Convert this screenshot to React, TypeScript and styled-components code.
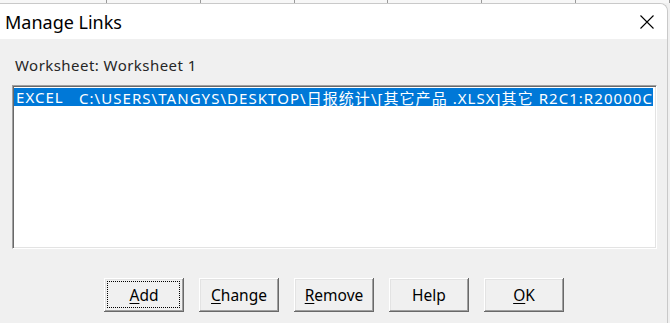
import React from 'react';
import styled, { createGlobalStyle } from 'styled-components';

const Global = createGlobalStyle`
  html, body { margin: 0; padding: 0; }
  body {
    width: 670px;
    height: 323px;
    overflow: hidden;
    background: #f0f0f0;
    font-family: "Segoe UI", "Noto Sans", "Noto Sans CJK SC", sans-serif;
  }
`;

const Screen = styled.div`
  display: flex;
  flex-direction: column;
  height: 323px;
`;

const BackStrip = styled.div`
  height: 3px;
  display: flex;
  background: #f7f7f7;
  padding-left: 13px;
`;

const BackCell = styled.div`
  width: 97px;
  border-right: 1px solid #9a9a9a;
  box-sizing: border-box;
`;

const Window = styled.div`
  flex: 1;
  display: flex;
  flex-direction: column;
  width: 668px;
  background: #f0f0f0;
  border-top-right-radius: 8px;
  border-top: 1px solid #c9c9c9;
  border-right: 1px solid #c9c9c9;
  box-sizing: border-box;
  overflow: hidden;
`;

const TitleBar = styled.div`
  height: 35px;
  display: flex;
  align-items: center;
  justify-content: space-between;
  background: #ffffff;
  padding: 0 12px 0 5px;
`;

const Title = styled.div`
  font-size: 18px;
  color: #000;
  font-family: "Noto Sans", sans-serif;
`;

const CloseIcon = styled.svg`
  width: 16px;
  height: 16px;
  display: block;
`;

const Body = styled.div`
  flex: 1;
  display: flex;
  flex-direction: column;
  padding: 0 10px 0 12px;
`;

const Label = styled.div`
  margin-top: 17px;
  height: 18px;
  line-height: 18px;
  font-size: 15px;
  letter-spacing: 0.45px;
  color: #262626;
  padding-left: 3px;
  font-family: "Noto Sans", sans-serif;
`;

const ListBox = styled.div`
  margin-top: 11px;
  height: 164px;
  background: #fff;
  box-sizing: border-box;
  border-top: 1px solid #a0a0a0;
  border-left: 1px solid #a0a0a0;
  border-bottom: 1px solid #ffffff;
  border-right: 1px solid #ffffff;
  box-shadow: inset 1px 1px #696969, inset -1px -1px #e3e3e3;
  padding: 2px 3px 2px 1px;
  overflow: hidden;
`;

const Row = styled.div<{ $selected?: boolean }>`
  height: 18px;
  display: flex;
  align-items: center;
  white-space: pre;
  overflow: hidden;
  padding-left: 2px;
  font-size: 15px;
  letter-spacing: 1.05px;
  font-family: "Noto Sans", "Noto Sans CJK SC", sans-serif;
  background: ${(p) => (p.$selected ? '#0078d7' : 'transparent')};
  color: ${(p) => (p.$selected ? '#ffffff' : '#000000')};
`;

const Kind = styled.span`
  width: 63px;
  flex: none;
`;

const Path = styled.span`
  flex: none;
`;

const ButtonRow = styled.div`
  margin-top: 29px;
  display: flex;
  gap: 15px;
  padding-left: 92px;
`;

const Button = styled.div<{ $default?: boolean }>`
  width: 80px;
  height: 34px;
  box-sizing: border-box;
  display: flex;
  align-items: center;
  justify-content: center;
  position: relative;
  background: #f0f0f0;
  font-size: 15.5px;
  color: #000;
  font-family: "Noto Sans", sans-serif;
  box-shadow: inset -1px -1px #696969, inset 1px 1px #ffffff, inset -2px -2px #a0a0a0, inset 2px 2px #e3e3e3;
  ${(p) =>
    p.$default
      ? `
    &::after {
      content: '';
      position: absolute;
      left: 3px; top: 3px; right: 4px; bottom: 4px;
      border: 1px dotted #000;
    }
  `
      : ''}
`;

const Key = styled.span`
  text-decoration: underline;
  text-underline-offset: 2px;
`;

export default function App() {
  return (
    <Screen>
      <Global />
      <BackStrip>
        <BackCell />
        <BackCell />
        <BackCell />
        <BackCell />
        <BackCell />
        <BackCell />
        <BackCell />
      </BackStrip>
      <Window>
        <TitleBar>
          <Title>Manage Links</Title>
          <CloseIcon viewBox="0 0 16 16">
            <path d="M1.5 1.5 L14.5 14.5 M14.5 1.5 L1.5 14.5" stroke="#000" strokeWidth="1.1" fill="none" />
          </CloseIcon>
        </TitleBar>
        <Body>
          <Label>Worksheet: Worksheet 1</Label>
          <ListBox>
            <Row $selected>
              <Kind>EXCEL</Kind>
              <Path>C:\USERS\TANGYS\DESKTOP\日报统计\[其它产品 .XLSX]其它 R2C1:R20000C</Path>
            </Row>
          </ListBox>
          <ButtonRow>
            <Button $default>
              <span><Key>A</Key>dd</span>
            </Button>
            <Button>
              <span><Key>C</Key>hange</span>
            </Button>
            <Button>
              <span><Key>R</Key>emove</span>
            </Button>
            <Button>
              <span>Help</span>
            </Button>
            <Button>
              <span><Key>O</Key>K</span>
            </Button>
          </ButtonRow>
        </Body>
      </Window>
    </Screen>
  );
}
